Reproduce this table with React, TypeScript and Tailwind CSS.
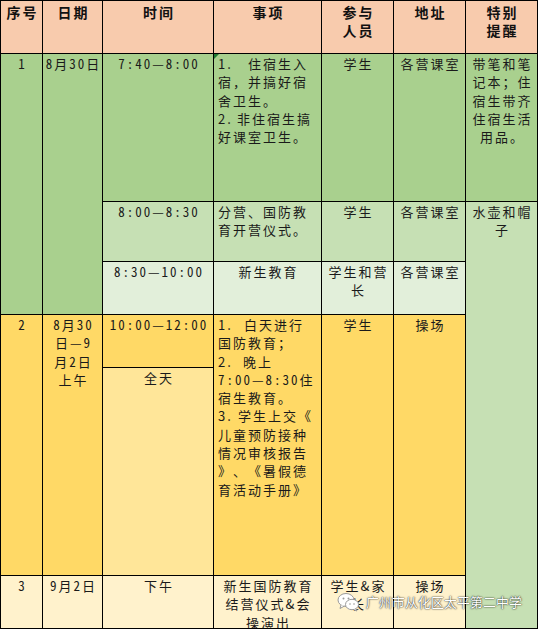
import * as React from "react"

const font = "[font-family:'Noto_Sans_CJK_SC',sans-serif] [text-spacing-trim:space-all]"
// half-width digits for the time strings, only where there is no CJK punctuation
const hw = "[font-feature-settings:'hwid']"

function Cell({ className, children }: { className: string; children?: React.ReactNode }) {
    return (
        <div className={`relative overflow-hidden text-[13px] leading-[18.3px] tracking-[2px] text-[#1a1a1a] pt-[1px] ${className}`}>
            {children}
        </div>
    )
}

function Item({ num, w, children }: { num: string; w: string; children: React.ReactNode }) {
    return (
        <div className="flex whitespace-nowrap">
            <span className={`inline-block ${w}`}>{num}</span>
            <span>{children}</span>
        </div>
    )
}

const Head = ({ className, children }: { className: string; children: React.ReactNode }) => (
    <div className={`bg-[#f8cbad] text-center font-bold text-[14px] leading-[18px] tracking-[2px] pl-[2px] pt-[2px] text-[#111] ${className}`}>
        {children}
    </div>
)

export default function App() {
    return (
        <div className={`relative w-[538px] h-[629px] ${font}`}>
            <div className="grid w-[538px] h-[629px] bg-black gap-px p-px grid-cols-[41px_59px_110px_107px_71px_71px_71px] grid-rows-[52px_147px_59px_52px_52px_207px_52px]">
                {/* header */}
                <Head className="col-start-1 row-start-1">序号</Head>
                <Head className="col-start-2 row-start-1">日期</Head>
                <Head className="col-start-3 row-start-1">时间</Head>
                <Head className="col-start-4 row-start-1">事项</Head>
                <Head className="col-start-5 row-start-1">参与<br />人员</Head>
                <Head className="col-start-6 row-start-1">地址</Head>
                <Head className="col-start-7 row-start-1">特别<br />提醒</Head>

                {/* row 1 */}
                <Cell className={`col-start-1 row-start-2 row-span-3 bg-[#a9d08e] text-center pl-[2px] ${hw}`}>1</Cell>
                <Cell className={`col-start-2 row-start-2 row-span-3 bg-[#a9d08e] text-center pl-[2px] ${hw}`}>8月30日</Cell>
                <Cell className={`col-start-3 row-start-2 bg-[#a9d08e] text-center pl-[2px] tracking-[1.5px] ${hw}`}>7:40—8:00</Cell>
                <Cell className="col-start-4 row-start-2 bg-[#a9d08e] pl-[4px]">
                    <span className="absolute left-0 top-0 w-0 h-0 border-t-[5px] border-t-[#1e7b34] border-r-[5px] border-r-transparent" />
                    <Item num="1." w="w-[30px]">住宿生入</Item>
                    <div>宿，并搞好宿</div>
                    <div>舍卫生。</div>
                    <Item num="2." w="w-[19px]">非住宿生搞</Item>
                    <div>好课室卫生。</div>
                </Cell>
                <Cell className="col-start-5 row-start-2 bg-[#a9d08e] text-center pl-[2px]">学生</Cell>
                <Cell className="col-start-6 row-start-2 bg-[#a9d08e] text-center pl-[2px]">各营课室</Cell>
                <Cell className="col-start-7 row-start-2 bg-[#a9d08e] text-center pl-[2px]">
                    带笔和笔<br />记本；住<br />宿生带齐<br />住宿生活<br />用品。
                </Cell>

                <Cell className={`col-start-3 row-start-3 bg-[#c6e0b4] text-center pl-[2px] tracking-[1.5px] ${hw}`}>8:00—8:30</Cell>
                <Cell className="col-start-4 row-start-3 bg-[#c6e0b4] pl-[4px]">
                    <div>分营、国防教</div>
                    <div>育开营仪式。</div>
                </Cell>
                <Cell className="col-start-5 row-start-3 bg-[#c6e0b4] text-center pl-[2px]">学生</Cell>
                <Cell className="col-start-6 row-start-3 bg-[#c6e0b4] text-center pl-[2px]">各营课室</Cell>
                <Cell className="col-start-7 row-start-3 row-span-5 bg-[#c6e0b4] text-center pl-[2px]">
                    水壶和帽<br />子
                </Cell>

                <Cell className={`col-start-3 row-start-4 bg-[#e2efda] text-center pl-[2px] tracking-[1.5px] ${hw}`}>8:30—10:00</Cell>
                <Cell className="col-start-4 row-start-4 bg-[#e2efda] text-center pl-[2px]">新生教育</Cell>
                <Cell className="col-start-5 row-start-4 bg-[#e2efda] text-center pl-[2px]">学生和营<br />长</Cell>
                <Cell className="col-start-6 row-start-4 bg-[#e2efda] text-center pl-[2px]">各营课室</Cell>

                {/* row 2 */}
                <Cell className={`col-start-1 row-start-5 row-span-2 bg-[#ffd966] text-center pl-[2px] ${hw}`}>2</Cell>
                <Cell className={`col-start-2 row-start-5 row-span-2 bg-[#ffd966] text-center pl-[2px] ${hw}`}>
                    8月30<br />日—9<br />月2日<br />上午
                </Cell>
                <Cell className={`col-start-3 row-start-5 bg-[#ffd966] text-center pl-[2px] tracking-[1.5px] ${hw}`}>10:00—12:00</Cell>
                <Cell className="col-start-3 row-start-6 bg-[#ffe699] text-center pl-[2px]">全天</Cell>
                <Cell className="col-start-4 row-start-5 row-span-2 bg-[#ffd966] pl-[4px]">
                    <Item num="1." w="w-[26px]">白天进行</Item>
                    <div>国防教育；</div>
                    <Item num="2." w="w-[25px]">晚上</Item>
                    <div className={`whitespace-nowrap ${hw}`}>7:00—8:30住</div>
                    <div>宿生教育。</div>
                    <Item num="3." w="w-[20px]">学生上交《</Item>
                    <div>儿童预防接种</div>
                    <div>情况审核报告</div>
                    <div>》、《暑假德</div>
                    <div>育活动手册》</div>
                </Cell>
                <Cell className="col-start-5 row-start-5 row-span-2 bg-[#ffd966] text-center pl-[2px]">学生</Cell>
                <Cell className="col-start-6 row-start-5 row-span-2 bg-[#ffd966] text-center pl-[2px]">操场</Cell>

                {/* row 3 */}
                <Cell className={`col-start-1 row-start-7 bg-[#fff2cc] text-center pl-[2px] ${hw}`}>3</Cell>
                <Cell className={`col-start-2 row-start-7 bg-[#fff2cc] text-center pl-[2px] ${hw}`}>9月2日</Cell>
                <Cell className="col-start-3 row-start-7 bg-[#fff2cc] text-center pl-[2px]">下午</Cell>
                <Cell className="col-start-4 row-start-7 bg-[#fff2cc] text-center pl-[2px]">
                    新生国防教育<br />结营仪式&amp;会<br />操演出
                </Cell>
                <Cell className="col-start-5 row-start-7 bg-[#fff2cc] text-center pl-[2px]">学生&amp;家<br />长</Cell>
                <Cell className="col-start-6 row-start-7 bg-[#fff2cc] text-center pl-[2px]">操场</Cell>
            </div>

            {/* watermark */}
            <div className="absolute left-[337px] top-[592px] flex items-center gap-[6px]">
                <svg width="23" height="20" viewBox="0 0 23 20">
                    <ellipse cx="9" cy="8" rx="8" ry="6.5" fill="#fff" stroke="#9a9a9a" strokeWidth="1" />
                    <path d="M4 13 L3 16.5 L7.5 14" fill="#fff" stroke="#9a9a9a" strokeWidth="1" />
                    <ellipse cx="15" cy="12.5" rx="6.5" ry="5.2" fill="#fff" stroke="#9a9a9a" strokeWidth="1" />
                    <path d="M18.5 16.5 L20 19 L16 17.3" fill="#fff" stroke="#9a9a9a" strokeWidth="1" />
                    <circle cx="6.5" cy="6.5" r="1" fill="#9a9a9a" />
                    <circle cx="11.5" cy="6.5" r="1" fill="#9a9a9a" />
                    <circle cx="13" cy="12" r="0.8" fill="#9a9a9a" />
                    <circle cx="17" cy="12" r="0.8" fill="#9a9a9a" />
                </svg>
                <span className="text-[13px] leading-[16px] text-white [text-shadow:0_0_2px_rgba(0,0,0,0.75),0_0_1px_rgba(0,0,0,0.8)]">
                    广州市从化区太平第二中学
                </span>
            </div>
        </div>
    )
}
